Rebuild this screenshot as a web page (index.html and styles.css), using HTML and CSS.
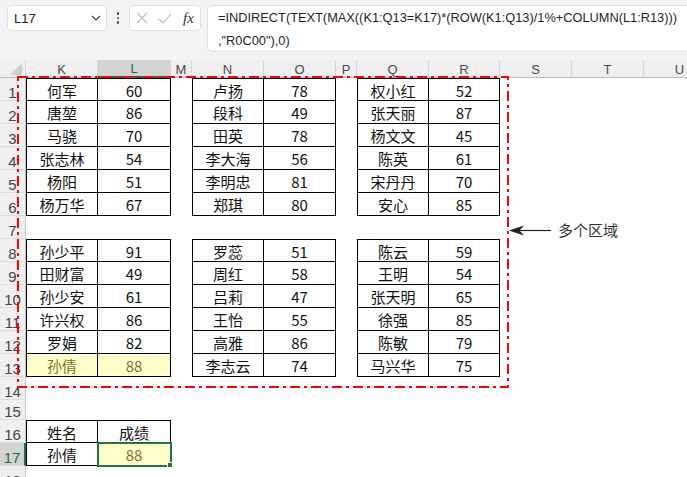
FILE: index.html
```html
<!DOCTYPE html>
<html lang="zh">
<head>
<meta charset="utf-8">
<title>INDIRECT 多个区域</title>
<link rel="stylesheet" href="styles.css">
</head>
<body>
<div class="topbar">
  <div class="namebox"><span>L17</span>
    <svg class="chev" width="10" height="6" viewBox="0 0 10 6"><polyline points="1,1 5,5 9,1" fill="none" stroke="#444" stroke-width="1.2"/></svg>
  </div>
  <div class="dots"><i></i><i></i><i></i></div>
  <div class="fxbox">
    <svg width="12" height="12" viewBox="0 0 12 12"><path d="M1 1 L11 11 M11 1 L1 11" stroke="#b9b9b9" stroke-width="1.1" fill="none"/></svg>
    <svg width="14" height="11" viewBox="0 0 14 11"><polyline points="1,6 5,10 13,1" stroke="#b9b9b9" stroke-width="1.1" fill="none"/></svg>
    <span class="fx">fx</span>
  </div>
  <div class="formula">=INDIRECT(TEXT(MAX((K1:Q13=K17)*(ROW(K1:Q13)/1%+COLUMN(L1:R13)))<br>,"R0C00"),0)</div>
</div>

<div class="sheet">
  <div class="row head">
    <div class="corner"><svg width="12" height="12" viewBox="0 0 12 12"><polygon points="12,0 12,12 0,12" fill="#cfcfcf"/></svg></div>
    <div class="ch">K</div><div class="ch sel-col">L</div><div class="ch">M</div><div class="ch">N</div><div class="ch">O</div><div class="ch">P</div><div class="ch">Q</div><div class="ch">R</div><div class="ch">S</div><div class="ch">T</div><div class="ch">U</div>
  </div>

  <div class="row"><div class="rh">1</div><div class="c b bl bt">何军</div><div class="c b bt">60</div><div class="c"></div><div class="c b bl bt">卢扬</div><div class="c b bt">78</div><div class="c"></div><div class="c b bl bt">权小红</div><div class="c b bt">52</div></div>
  <div class="row"><div class="rh">2</div><div class="c b bl">唐堃</div><div class="c b">86</div><div class="c"></div><div class="c b bl">段科</div><div class="c b">49</div><div class="c"></div><div class="c b bl">张天丽</div><div class="c b">87</div></div>
  <div class="row"><div class="rh">3</div><div class="c b bl">马骁</div><div class="c b">70</div><div class="c"></div><div class="c b bl">田英</div><div class="c b">78</div><div class="c"></div><div class="c b bl">杨文文</div><div class="c b">45</div></div>
  <div class="row"><div class="rh">4</div><div class="c b bl">张志林</div><div class="c b">54</div><div class="c"></div><div class="c b bl">李大海</div><div class="c b">56</div><div class="c"></div><div class="c b bl">陈英</div><div class="c b">61</div></div>
  <div class="row"><div class="rh">5</div><div class="c b bl">杨阳</div><div class="c b">51</div><div class="c"></div><div class="c b bl">李明忠</div><div class="c b">81</div><div class="c"></div><div class="c b bl">宋丹丹</div><div class="c b">70</div></div>
  <div class="row"><div class="rh">6</div><div class="c b bl">杨万华</div><div class="c b">67</div><div class="c"></div><div class="c b bl">郑琪</div><div class="c b">80</div><div class="c"></div><div class="c b bl">安心</div><div class="c b">85</div></div>
  <div class="row"><div class="rh">7</div></div>
  <div class="row"><div class="rh">8</div><div class="c b bl bt">孙少平</div><div class="c b bt">91</div><div class="c"></div><div class="c b bl bt">罗蕊</div><div class="c b bt">51</div><div class="c"></div><div class="c b bl bt">陈云</div><div class="c b bt">59</div></div>
  <div class="row"><div class="rh">9</div><div class="c b bl">田财富</div><div class="c b">49</div><div class="c"></div><div class="c b bl">周红</div><div class="c b">58</div><div class="c"></div><div class="c b bl">王明</div><div class="c b">54</div></div>
  <div class="row"><div class="rh">10</div><div class="c b bl">孙少安</div><div class="c b">61</div><div class="c"></div><div class="c b bl">吕莉</div><div class="c b">47</div><div class="c"></div><div class="c b bl">张天明</div><div class="c b">65</div></div>
  <div class="row"><div class="rh">11</div><div class="c b bl">许兴权</div><div class="c b">86</div><div class="c"></div><div class="c b bl">王怡</div><div class="c b">55</div><div class="c"></div><div class="c b bl">徐强</div><div class="c b">85</div></div>
  <div class="row"><div class="rh">12</div><div class="c b bl">罗娟</div><div class="c b">82</div><div class="c"></div><div class="c b bl">高雅</div><div class="c b">86</div><div class="c"></div><div class="c b bl">陈敏</div><div class="c b">79</div></div>
  <div class="row"><div class="rh">13</div><div class="c b bl hl">孙倩</div><div class="c b hl">88</div><div class="c"></div><div class="c b bl">李志云</div><div class="c b">74</div><div class="c"></div><div class="c b bl">马兴华</div><div class="c b">75</div></div>
  <div class="row"><div class="rh">14</div></div>
  <div class="row short"><div class="rh">15</div></div>
  <div class="row"><div class="rh">16</div><div class="c b bl bt">姓名</div><div class="c b bt">成绩</div></div>
  <div class="row"><div class="rh sel-row">17</div><div class="c b bl">孙倩</div><div class="c b hl active">88</div></div>
  <div class="row"><div class="rh">18</div></div>
</div>

<svg class="overlay" width="687" height="477" viewBox="0 0 687 477">
  <rect x="18" y="77" width="490" height="310" fill="none" stroke="#ff0000" stroke-width="2" stroke-dasharray="10 4 3 4"/>
  <line x1="519" y1="230.5" x2="551" y2="230.5" stroke="#222" stroke-width="1.2"/>
  <polygon points="509,230.5 524,225.5 519.5,230.5 524,235.5" fill="#222"/>
</svg>
<div class="note">多个区域</div>
</body>
</html>
```
FILE: styles.css
```css
html, body {
  margin: 0;
  padding: 0;
}
body {
  width: 687px;
  height: 477px;
  overflow: hidden;
  background: #ffffff;
  position: relative;
  font-family: "Noto Sans CJK SC", "Noto Sans", sans-serif;
}

.topbar {
  height: 60px;
  box-sizing: border-box;
  background: #f3f3f3;
  display: flex;
  align-items: flex-start;
  padding: 5px 0 0 7px;
}
.namebox {
  width: 100px;
  height: 26px;
  box-sizing: border-box;
  background: #fff;
  border: 1px solid #e0e0e0;
  border-radius: 4px;
  display: flex;
  align-items: center;
  justify-content: space-between;
  padding: 0 5px 0 6px;
  font-family: "Liberation Sans", sans-serif;
  font-size: 13px;
  color: #222;
}
.dots {
  width: 22px;
  height: 26px;
  display: flex;
  flex-direction: column;
  align-items: center;
  justify-content: center;
  gap: 2px;
}
.dots i {
  width: 2.5px;
  height: 2.5px;
  border-radius: 50%;
  background: #444;
}
.fxbox {
  width: 72px;
  height: 26px;
  box-sizing: border-box;
  background: #fff;
  border: 1px solid #e0e0e0;
  border-radius: 4px;
  display: flex;
  align-items: center;
  padding: 0 0 0 6px;
  gap: 10px;
}
.fx {
  font-family: "Liberation Serif", serif;
  font-style: italic;
  font-size: 15px;
  color: #333;
  margin-left: 1px;
}
.formula {
  margin-left: 6px;
  flex: 1;
  height: 47px;
  box-sizing: border-box;
  background: #fff;
  border: 1px solid #e0e0e0;
  border-right: none;
  border-radius: 5px 0 0 5px;
  padding: 0 0 0 10px;
  font-family: "Liberation Sans", sans-serif;
  font-size: 12.8px;
  line-height: 23px;
  color: #1f1f1f;
  white-space: nowrap;
  overflow: hidden;
}

.sheet {
  width: 687px;
  overflow: hidden;
}
.row {
  display: grid;
  grid-template-columns: 26px 72px 73px 21px 72px 72px 21px 72px 71px 72px 72px 72px;
  height: 23px;
}
.row.short {
  height: 20px;
}
.row.head {
  height: 18px;
}
.corner {
  background: #efefef;
  border-right: 1px solid #d6d6d6;
  border-bottom: 1px solid #bcbcbc;
  display: flex;
  align-items: flex-end;
  justify-content: flex-end;
  padding: 0 3px 2px 0;
}
.ch {
  background: #efefef;
  border-right: 1px solid #d6d6d6;
  border-bottom: 1px solid #bcbcbc;
  font-family: "Liberation Sans", sans-serif;
  font-size: 13px;
  color: #4a4a4a;
  display: flex;
  align-items: center;
  justify-content: center;
  line-height: 1;
  padding-top: 1px;
}
.ch.sel-col {
  background: #d3d3d3;
  border-bottom: 2px solid #1e7145;
  color: #1e6b41;
}
.rh {
  background: #efefef;
  border-right: 1px solid #c6c6c6;
  border-bottom: 1px solid #dcdcdc;
  font-family: "Liberation Sans", sans-serif;
  font-size: 15px;
  color: #444;
  line-height: 15px;
  display: flex;
  align-items: flex-end;
  justify-content: center;
  padding-bottom: 0;
}
.rh.sel-row {
  background: #d3d3d3;
  border-right: 2px solid #1e7145;
  color: #1e6b41;
}
.c {
  font-size: 15px;
  color: #111;
  display: flex;
  align-items: center;
  justify-content: center;
  line-height: 1;
  padding-top: 1px;
  position: relative;
}
.b {
  border-right: 1px solid #000;
  border-bottom: 1px solid #000;
}
.bl {
  border-left: 1px solid #000;
}
.bt {
  border-top: 1px solid #000;
}
.hl {
  background: #ffffcc;
  color: #86702a;
}
.active {
  outline: 2px solid #217346;
  outline-offset: -1px;
}
.active::after {
  content: "";
  position: absolute;
  right: -3px;
  bottom: -3px;
  width: 6px;
  height: 6px;
  background: #217346;
  border: 1px solid #fff;
  box-sizing: border-box;
}

.overlay {
  position: absolute;
  left: 0;
  top: 0;
  pointer-events: none;
}
.note {
  position: absolute;
  left: 558px;
  top: 219px;
  font-size: 15px;
  line-height: 22px;
  color: #333;
}
```
